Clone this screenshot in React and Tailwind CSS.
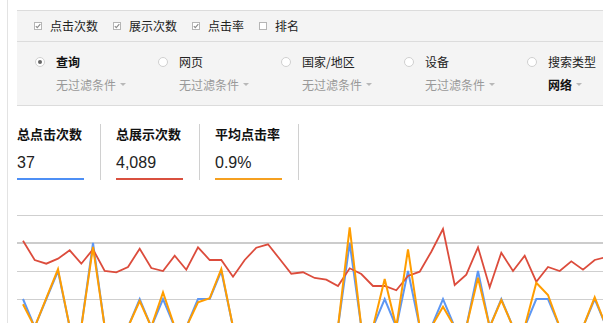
import React from "react";

const red = [240.7,260,263.7,258.7,250.3,263.7,249.3,271,272.3,267,248.7,268,271,255.7,269.7,247.3,260,260,276.7,260,247.7,244.3,259,273.7,272.3,278,279.7,286,268.3,274,286,286,290.3,276,271.7,251.7,229,285,274.7,247.3,287.3,252.7,271,255.7,281.7,267,271,261.3,269.7,260,257];
const blue = [299,327,299,271,327,327,243,327,327,327,299,327,299,327,327,299,299,271,327,327,327,327,327,327,327,327,327,327,243,327,327,299,327,271,327,327,299,327,327,271,327,299,327,327,299,299,327,327,327,299,327];
const orange = [304.3,327,298.2,269.3,327,327,247,327,327,327,301,327,292.3,327,327,302.3,298.3,269,327,327,327,327,327,327,327,327,327,327,227.3,327,327,279,327,249.3,327,327,306.7,327,327,277.7,327,300,327,327,282.7,295,327,327,327,297.3,327];

const pts = (vals) =>
  vals.map((y, i) => `${(6 + i * 11.667).toFixed(1)},${(y - 200).toFixed(1)}`).join(" ");

function Check({ checked }) {
  return (
    <svg width="8" height="8" viewBox="0 0 8 8" className="shrink-0">
      <rect x="0.5" y="0.5" width="7" height="7" fill="#fff" stroke="#b5b5b5" />
      {checked && <path d="M1.8 4.2 L3.3 5.7 L6.3 2.2" fill="none" stroke="#8a8a8a" strokeWidth="1.1" />}
    </svg>
  );
}

function Caret() {
  return (
    <svg width="6" height="4" viewBox="0 0 6 4" className="ml-[4px] shrink-0">
      <path d="M0 0 L6 0 L3 3 Z" fill="#b8b8b8" />
    </svg>
  );
}

function Radio({ on, label, sub, subBold }) {
  return (
    <div className="flex w-[123px] shrink-0 items-start">
      <div className="mt-[3px] flex h-[10px] w-[10px] shrink-0 items-center justify-center rounded-full border border-[#d0d0d0] bg-white">
        {on && <div className="h-[4px] w-[4px] rounded-full bg-[#666]" />}
      </div>
      <div className="ml-[11px] flex flex-col">
        <div className={"text-[12px] leading-[16px] " + (on ? "font-bold text-[#111]" : "text-[#222]")}>{label}</div>
        <div className="mt-[6.5px] flex items-center">
          <span className={"text-[12px] leading-[16px] " + (subBold ? "font-bold text-[#111]" : "text-[#999]")}>{sub}</span>
          <Caret />
        </div>
      </div>
    </div>
  );
}

function Metric({ title, value, color }) {
  return (
    <div className="flex w-[67px] shrink-0 flex-col">
      <div className="mt-[1px] whitespace-nowrap text-[13px] font-bold leading-[18px] text-[#111]">{title}</div>
      <div className="mt-[10px] text-[16px] leading-[20px] text-[#222]" style={{ fontFamily: '"Liberation Sans", Arial, sans-serif' }}>{value}</div>
      <div className={"mt-[5px] h-[2px] w-full " + color} />
    </div>
  );
}

export default function App() {
  return (
    <div
      className="flex h-[323px] w-[603px] overflow-hidden bg-white"
      style={{ fontFamily: '"Noto Sans CJK SC", "Liberation Sans", sans-serif' }}
    >
      <div className="w-[7px] shrink-0" />
      <div className="flex min-w-0 flex-1 flex-col border-l border-[#e3e3e3] pl-[9px] pt-[10px]">
        <div className="border-y border-[#dcdcdc] bg-[#f4f4f4]">
          <div className="flex h-[31px] items-center gap-[15px] border-b border-[#dcdcdc] pl-[17px]">
            {[["点击次数", true], ["展示次数", true], ["点击率", true], ["排名", false]].map(([t, c]) => (
              <div key={t} className="flex items-center">
                <Check checked={c} />
                <span className="ml-[8px] text-[12px] leading-[16px] text-[#222]">{t}</span>
              </div>
            ))}
          </div>
          <div className="flex h-[63px] pl-[18px] pt-[12px]">
            <Radio on label="查询" sub="无过滤条件" />
            <Radio label="网页" sub="无过滤条件" />
            <Radio label="国家/地区" sub="无过滤条件" />
            <Radio label="设备" sub="无过滤条件" />
            <Radio label="搜索类型" sub="网络" subBold />
          </div>
        </div>
        <div className="mt-[18px] flex h-[56px] items-stretch">
          <Metric title="总点击次数" value="37" color="bg-[#4d8ff5]" />
          <div className="ml-[16px] mr-[15px] w-px bg-[#d0d0d0]" />
          <Metric title="总展示次数" value="4,089" color="bg-[#d9503f]" />
          <div className="ml-[16px] mr-[15px] w-px bg-[#d0d0d0]" />
          <Metric title="平均点击率" value="0.9%" color="bg-[#f5a020]" />
          <div className="ml-[16px] w-px bg-[#d0d0d0]" />
        </div>
        <div className="mt-[20px]">
          <svg width="586" height="130" viewBox="0 0 586 130" className="block">
            <line x1="0" x2="586" y1="15.5" y2="15.5" stroke="#cfcfcf" strokeWidth="1" />
            <line x1="0" x2="586" y1="43" y2="43" stroke="#cccccc" strokeWidth="2" />
            <line x1="0" x2="586" y1="71.5" y2="71.5" stroke="#cfcfcf" strokeWidth="1" />
            <line x1="0" x2="586" y1="99.5" y2="99.5" stroke="#cfcfcf" strokeWidth="1" />
            <polyline points={pts(blue)} fill="none" stroke="#5d97f4" strokeWidth="2" strokeLinejoin="miter" />
            <polyline points={pts(red)} fill="none" stroke="#dc4c3c" strokeWidth="1.8" strokeLinejoin="miter" />
            <polyline points={pts(orange)} fill="none" stroke="#ff9d00" strokeWidth="2" strokeLinejoin="miter" />
          </svg>
        </div>
      </div>
    </div>
  );
}
